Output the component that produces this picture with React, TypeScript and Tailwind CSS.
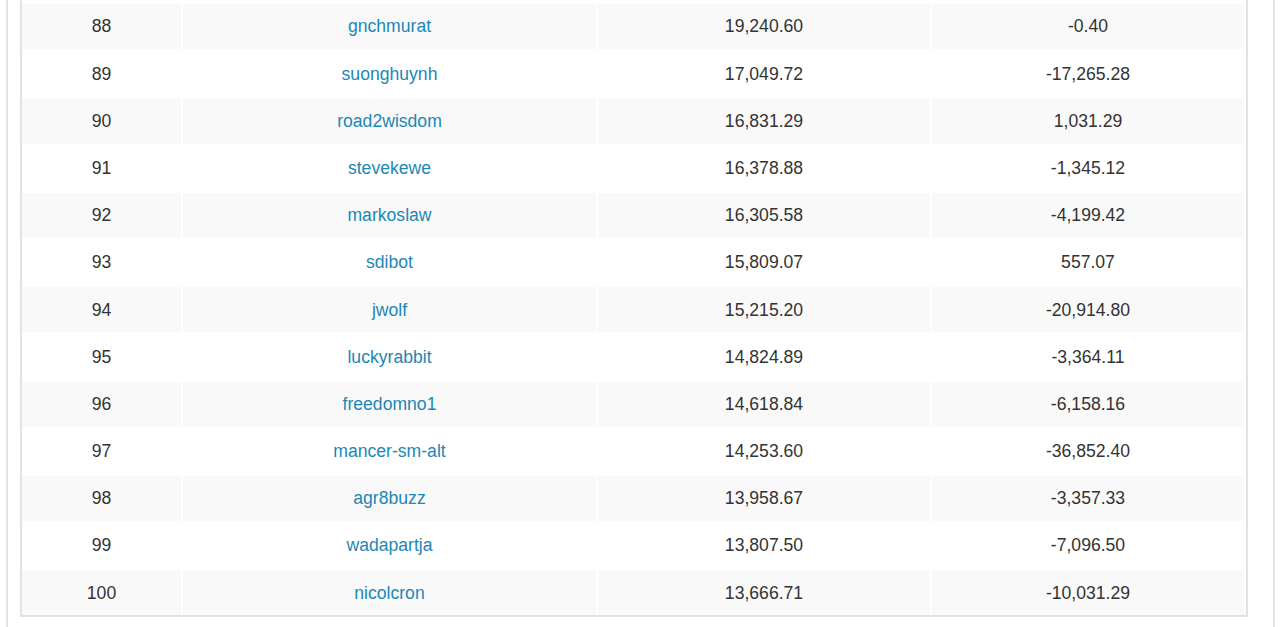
const ROWS = [
  { rank: 88, user: "gnchmurat", value: "19,240.60", change: "-0.40" },
  { rank: 89, user: "suonghuynh", value: "17,049.72", change: "-17,265.28" },
  { rank: 90, user: "road2wisdom", value: "16,831.29", change: "1,031.29" },
  { rank: 91, user: "stevekewe", value: "16,378.88", change: "-1,345.12" },
  { rank: 92, user: "markoslaw", value: "16,305.58", change: "-4,199.42" },
  { rank: 93, user: "sdibot", value: "15,809.07", change: "557.07" },
  { rank: 94, user: "jwolf", value: "15,215.20", change: "-20,914.80" },
  { rank: 95, user: "luckyrabbit", value: "14,824.89", change: "-3,364.11" },
  { rank: 96, user: "freedomno1", value: "14,618.84", change: "-6,158.16" },
  { rank: 97, user: "mancer-sm-alt", value: "14,253.60", change: "-36,852.40" },
  { rank: 98, user: "agr8buzz", value: "13,958.67", change: "-3,357.33" },
  { rank: 99, user: "wadapartja", value: "13,807.50", change: "-7,096.50" },
  { rank: 100, user: "nicolcron", value: "13,666.71", change: "-10,031.29" },
];

export default function App() {
  return (
    <div
      className="min-h-screen bg-white"
      style={{ fontFamily: '"Liberation Sans", Arial, sans-serif' }}
    >
      <div className="ml-[6px] w-[1269px] min-h-screen border-x-2 border-[#e4e4e4]">
        <div className="ml-[12px] w-[1228px] border-2 border-t-0 border-[#e2e2e2] pt-[4px] pr-[2px]">
          <div className="flex flex-col gap-[2px]">
            {ROWS.map((r, i) => (
              <div
                key={r.rank}
                className="flex gap-[2px] h-[45.2px] text-[17.6px] text-[#333]"
              >
                <Cell striped={i % 2 === 0} width="w-[159px]">
                  {r.rank}
                </Cell>
                <Cell striped={i % 2 === 0} width="w-[413px]">
                  <a href="#" className="text-[#1d87b6]">
                    {r.user}
                  </a>
                </Cell>
                <Cell striped={i % 2 === 0} width="w-[332px]">
                  {r.value}
                </Cell>
                <Cell striped={i % 2 === 0} width="w-[312px]">
                  {r.change}
                </Cell>
              </div>
            ))}
          </div>
        </div>
      </div>
    </div>
  );
}

function Cell({
  striped,
  width,
  children,
}: {
  striped: boolean;
  width: string;
  children: React.ReactNode;
}) {
  return (
    <div
      className={`${width} flex items-center justify-center ${
        striped ? "bg-[#f9f9f9]" : "bg-white"
      }`}
    >
      {children}
    </div>
  );
}
